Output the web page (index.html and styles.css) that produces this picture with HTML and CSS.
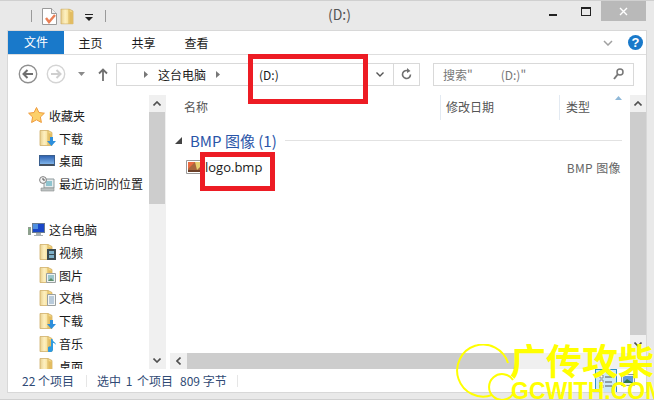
FILE: index.html
```html
<!DOCTYPE html>
<html lang="zh-CN">
<head>
    <meta charset="UTF-8">
    <title>(D:)</title>
    <link rel="stylesheet" href="styles.css">
</head>
<body>
    <svg class="defs" width="0" height="0">
        <defs>
            <linearGradient id="folder-fill" x1="0" y1="0" x2="1" y2="0">
                <stop offset="0" stop-color="#e8cf8e"/>
                <stop offset=".35" stop-color="#fdf0c0"/>
                <stop offset="1" stop-color="#f3cf6e"/>
            </linearGradient>
            <linearGradient id="screen-fill" x1="0" y1="0" x2="0" y2="1">
                <stop offset="0" stop-color="#2f62b0"/>
                <stop offset="1" stop-color="#7fb4ea"/>
            </linearGradient>
        </defs>
        <symbol id="folder" viewBox="0 0 16 16">
            <path d="M1 .5h8l4 2v13H1z" fill="url(#folder-fill)" stroke="#cfae68" stroke-width=".8"/>
            <path d="M9 .5v15" stroke="#d9b75f" stroke-width="1"/>
            <path d="M9.500 3l3.500 1v11.500H9.500z" fill="#e2bc62"/>
        </symbol>
    </svg>

    <div class="window">
        <!-- title bar -->
        <div class="titlebar">
            <span class="qa-sep"></span>
            <svg class="qa-icon" width="15" height="17" viewBox="0 0 15 17">
                <path d="M.5.500h9l5 5v11H.5z" fill="#fff" stroke="#9a9a9a"/>
                <path d="M9.500.500v5h5" fill="#eee" stroke="#9a9a9a"/>
                <path d="M4 10l3 4 6-7" fill="none" stroke="#ea7f55" stroke-width="2.400"/>
            </svg>
            <svg class="qa-icon folder-qa" width="16" height="17" viewBox="0 0 16 16"><use href="#folder"/></svg>
            <svg class="qa-drop" width="8" height="7" viewBox="0 0 8 7">
                <path d="M0 0h8v1H0z M0 3h8L4 7z" fill="#222"/>
            </svg>
            <span class="qa-sep last"></span>
            <span class="title">(D:)</span>
            <div class="controls">
                <span class="ctl-min"></span>
                <span class="ctl-max"></span>
                <span class="ctl-close">
                    <svg width="9" height="9" viewBox="0 0 9 9"><path d="M1 1l7 7M8 1l-7 7" stroke="#fff" stroke-width="1.400"/></svg>
                </span>
            </div>
        </div>

        <div class="inner">
            <!-- ribbon tabs -->
            <div class="ribbon">
                <span class="tab-file">文件</span>
                <span class="tab">主页</span>
                <span class="tab tab-share">共享</span>
                <span class="tab">查看</span>
                <svg class="ribbon-chev" width="10" height="6" viewBox="0 0 10 6"><path d="M1 1l4 4 4-4" fill="none" stroke="#a0a0a0" stroke-width="1.500"/></svg>
                <span class="help">?</span>
            </div>

            <!-- address row -->
            <div class="nav">
                <svg class="nav-back" width="20" height="20" viewBox="0 0 20 20">
                    <circle cx="10" cy="10" r="8.700" fill="#fff" stroke="#8f8f8f" stroke-width="1.400"/>
                    <path d="M15 10H6M9.500 6l-4 4 4 4" fill="none" stroke="#6f6f6f" stroke-width="2"/>
                </svg>
                <svg class="nav-fwd" width="20" height="20" viewBox="0 0 20 20">
                    <circle cx="10" cy="10" r="8.700" fill="#fff" stroke="#d4d4d4" stroke-width="1.400"/>
                    <path d="M5 10h9M10.500 6l4 4-4 4" fill="none" stroke="#cfcfcf" stroke-width="2"/>
                </svg>
                <svg class="nav-down" width="7" height="4" viewBox="0 0 7 4"><path d="M0 0h7L3.500 4z" fill="#8a8a8a"/></svg>
                <svg class="nav-up" width="10" height="13" viewBox="0 0 10 13"><path d="M5 13V2M1 5.500L5 1.500l4 4" fill="none" stroke="#707070" stroke-width="1.800"/></svg>
                <div class="address">
                    <svg class="crumb-arrow first" width="4" height="7" viewBox="0 0 4 7"><path d="M0 0l4 3.500L0 7z" fill="#777"/></svg>
                    <span class="crumb">这台电脑</span>
                    <svg class="crumb-arrow" width="4" height="7" viewBox="0 0 4 7"><path d="M0 0l4 3.500L0 7z" fill="#777"/></svg>
                    <span class="crumb-d">(D:)</span>
                    <svg class="addr-chev" width="8" height="5" viewBox="0 0 8 5"><path d="M.5.500L4 4 7.500.500" fill="none" stroke="#555" stroke-width="1.400"/></svg>
                    <span class="addr-refresh">
                        <svg width="11" height="12" viewBox="0 0 11 12"><path d="M9.500 6.500a4 4 0 1 1-2-3.500" fill="none" stroke="#6f6f6f" stroke-width="1.600"/><path d="M6 0l3.500 3L6 5z" fill="#6f6f6f"/></svg>
                    </span>
                </div>
                <div class="search">
                    <span class="search-text">搜索"<span class="search-gap"></span>(D:)"</span>
                    <svg width="11" height="12" viewBox="0 0 11 12"><circle cx="7" cy="4" r="3" fill="none" stroke="#777" stroke-width="1.500"/><path d="M5 6l-4 5" stroke="#777" stroke-width="2"/></svg>
                </div>
            </div>

            <!-- sidebar and files -->
            <div class="panes">
                <div class="sidebar">
                    <div class="tree">
                        <div class="tree-row top">
                            <svg width="17" height="16" viewBox="0 0 17 16"><path d="M8.500 .5l2.400 5 5.500.7-4 3.800 1 5.500-4.900-2.700-4.900 2.700 1-5.500-4-3.800 5.500-.7z" fill="#fcd06a" stroke="#ee9a3c"/></svg>
                            收藏夹
                        </div>
                        <div class="tree-row sub">
                            <span class="tree-icon">
                                <svg width="16" height="16"><use href="#folder"/></svg>
                                <svg class="badge" width="9" height="9" viewBox="0 0 9 9"><path d="M3 0h3v4h3L4.500 9 0 4h3z" fill="#2d8fdc"/></svg>
                            </span>
                            下载
                        </div>
                        <div class="tree-row sub">
                            <svg width="16" height="16" viewBox="0 0 16 16"><path d="M0 2h16v11H0z" fill="#3a5f8e"/><path d="M1 3h14v8H1z" fill="url(#screen-fill)"/><path d="M1 11h14v2H1z" fill="#44505e"/></svg>
                            桌面
                        </div>
                        <div class="tree-row sub">
                            <svg width="16" height="16" viewBox="0 0 16 16"><path d="M5 3h10v9H5z" fill="#e4eaec" stroke="#8f9a9c"/><path d="M7 5h6v5H7z" fill="#8fc4cf"/><circle cx="4" cy="4" r="3.400" fill="#f4f4f4" stroke="#808080"/><path d="M4 2v2h2" fill="none" stroke="#555"/><path d="M2 12h13v3H2z" fill="#bcc2c2" stroke="#8a8f8f" stroke-width=".6"/></svg>
                            最近访问的位置
                        </div>
                        <div class="tree-row top pc">
                            <svg width="17" height="16" viewBox="0 0 17 16"><path d="M0 5h3v8H0z" fill="#8fa08f"/><path d="M1 7h1v1H1z" fill="#5fd06a"/><path d="M4 1h13v10H4z" fill="#6a7c90"/><path d="M5 2h11v8H5z" fill="#1a47c8"/><path d="M5 2h5v5H5z" fill="#4f8fe0"/><path d="M8 11h5v2h2v1H6v-1h2z" fill="#a8b0b4"/></svg>
                            这台电脑
                        </div>
                        <div class="tree-row sub">
                            <span class="tree-icon">
                                <svg width="16" height="16"><use href="#folder"/></svg>
                                <svg class="badge" width="9" height="11" viewBox="0 0 9 11"><path d="M0 0h9v11H0z" fill="#3b4a50"/><path d="M2 2h5v3H2zM2 6h5v3H2z" fill="#7db0c8"/></svg>
                            </span>
                            视频
                        </div>
                        <div class="tree-row sub">
                            <span class="tree-icon">
                                <svg width="16" height="16"><use href="#folder"/></svg>
                                <svg class="badge" width="10" height="10" viewBox="0 0 10 10"><path d="M.5.500h9v9h-9z" fill="#eef2f2" stroke="#9aa0a0"/><path d="M2 2h6v6H2z" fill="#9cc6cc"/><path d="M2 8l3-3 3 3z" fill="#5f8f6a"/></svg>
                            </span>
                            图片
                        </div>
                        <div class="tree-row sub">
                            <span class="tree-icon">
                                <svg width="16" height="16"><use href="#folder"/></svg>
                                <svg class="badge" width="9" height="12" viewBox="0 0 9 12"><path d="M.5.500h8v11h-8z" fill="#f4f6f6" stroke="#9aa0a0"/><path d="M2 3h5M2 5h5M2 7h5M2 9h5" stroke="#7fa0c0"/></svg>
                            </span>
                            文档
                        </div>
                        <div class="tree-row sub">
                            <span class="tree-icon">
                                <svg width="16" height="16"><use href="#folder"/></svg>
                                <svg class="badge" width="9" height="9" viewBox="0 0 9 9"><path d="M3 0h3v4h3L4.500 9 0 4h3z" fill="#2d8fdc"/></svg>
                            </span>
                            下载
                        </div>
                        <div class="tree-row sub">
                            <span class="tree-icon">
                                <svg width="16" height="16"><use href="#folder"/></svg>
                                <svg class="badge" width="8" height="13" viewBox="0 0 8 13"><path d="M3 0l1.500 0c0 3 3.500 3 3.500 6-1-1.500-2-2-3-2v6a3 3 0 1 1-2-2.500z" fill="#2d9ae0"/></svg>
                            </span>
                            音乐
                        </div>
                        <div class="tree-row sub">
                            <span class="tree-icon">
                                <svg width="16" height="16"><use href="#folder"/></svg>
                            </span>
                            桌面
                        </div>
                    </div>
                    <div class="vscroll">
                        <span class="sb-btn">
                            <svg width="8" height="5" viewBox="0 0 8 5"><path d="M.5 4.500L4 1l3.500 3.500" fill="none" stroke="#505050" stroke-width="1.600"/></svg>
                        </span>
                        <div class="sb-track"><div class="sb-thumb side"></div></div>
                        <span class="sb-btn">
                            <svg width="8" height="5" viewBox="0 0 8 5"><path d="M.5.500L4 4 7.500.500" fill="none" stroke="#505050" stroke-width="1.600"/></svg>
                        </span>
                    </div>
                </div>

                <div class="main">
                    <div class="main-top">
                        <div class="files">
                            <div class="columns">
                                <span class="col col-name">名称</span>
                                <span class="col col-date">修改日期</span>
                                <span class="col col-type">类型</span>
                                <svg class="sort" width="7" height="4" viewBox="0 0 7 4"><path d="M0 4l3.500-4L7 4z" fill="#8fb8d8"/></svg>
                            </div>
                            <div class="group">
                                <svg width="7" height="7" viewBox="0 0 7 7"><path d="M7 0v7H0z" fill="#444"/></svg>
                                <span class="group-name">BMP 图像 (1)</span>
                                <span class="group-line"></span>
                            </div>
                            <div class="file">
                                <svg width="16" height="16" viewBox="0 0 16 16"><path d="M.5 1.500h15v13H.5z" fill="#fff" stroke="#9a9a9a"/><path d="M2 3h12v10H2z" fill="#a8663c"/><path d="M2 3h7L2 10z" fill="#ea6a40"/><path d="M9 3h5v5l-3 3z" fill="#e8d070"/><path d="M2 11h12v2H2z" fill="#6c4028"/></svg>
                                <span class="file-name">logo.bmp</span>
                                <span class="file-type">BMP 图像</span>
                            </div>
                        </div>
                        <div class="vscroll">
                            <span class="sb-btn">
                                <svg width="8" height="5" viewBox="0 0 8 5"><path d="M.5 4.500L4 1l3.500 3.500" fill="none" stroke="#505050" stroke-width="1.600"/></svg>
                            </span>
                            <div class="sb-track"><div class="sb-thumb main-thumb"></div></div>
                            <span class="sb-btn">
                                <svg width="8" height="5" viewBox="0 0 8 5"><path d="M.5.500L4 4 7.500.500" fill="none" stroke="#505050" stroke-width="1.600"/></svg>
                            </span>
                        </div>
                    </div>
                    <div class="hscroll">
                        <span class="sb-btn">
                            <svg width="5" height="8" viewBox="0 0 5 8"><path d="M4.500.500L1 4l3.500 3.500" fill="none" stroke="#505050" stroke-width="1.600"/></svg>
                        </span>
                        <div class="h-thumb"></div>
                    </div>
                </div>
            </div>

            <!-- status bar -->
            <div class="status">
                <span class="st-count">22 个项目</span>
                <span class="st-sep"></span>
                <span class="st-sel">选中 1 个项目</span>
                <span class="st-size">809 字节</span>
                <span class="st-sep"></span>
                <div class="views">
                    <span class="view on">
                        <svg width="14" height="14" viewBox="0 0 14 14"><path d="M1 1h3v3H1zM1 6h3v3H1zM1 11h3v3H1z" fill="#fff" stroke="#777" stroke-width=".8"/><path d="M6 3h7M6 8h7M6 12h7" stroke="#555"/></svg>
                    </span>
                    <span class="view">
                        <svg width="14" height="14" viewBox="0 0 14 14"><path d="M.5 1.500h13v11H.5z" fill="#eef2f2" stroke="#8f9a9c"/><path d="M2 3h10v7H2z" fill="#5f9ade"/><path d="M2 10l4-4 6 4z" fill="#2f7a4a"/></svg>
                    </span>
                </div>
            </div>
        </div>
    </div>

    <!-- annotations and watermark sit over the window -->
    <div class="mark mark-addr"></div>
    <div class="mark mark-file"></div>
    <div class="watermark">
        <svg class="wm-ring" width="62" height="56" viewBox="0 0 62 56">
            <path d="M52 19A26 26 0 1 0 36 51" fill="none" stroke="#ffff00" stroke-width="2"/>
            <path d="M57 36A13 13 0 1 0 57 50" fill="none" stroke="#ffff00" stroke-width="2"/>
        </svg>
        <div class="wm-cn">广传攻柴</div>
        <div class="wm-en">GCWITH.COM</div>
    </div>
</body>
</html>
```

FILE: styles.css
```css
/* window frame */
html, body {
    margin: 0;
    height: 400px;
    overflow: hidden;
}
body {
    position: relative;
    font-family: "Noto Sans CJK SC", "Liberation Sans", sans-serif;
    font-size: 12px;
    color: #1a1a1a;
    background-color: #e9e9e9;
}
.defs {
    position: absolute;
}
.window {
    height: 400px;
    box-sizing: border-box;
    display: flex;
    flex-direction: column;
    border-top: 1px solid #d0d0d0;
    border-bottom: 1px solid #d0d0d0;
    padding: 0 8px 7px;
}

/* title bar */
.titlebar {
    position: relative;
    flex: none;
    height: 30px;
    display: flex;
    align-items: center;
    padding-left: 23px;
}
.qa-sep {
    width: 1px;
    height: 12px;
    background-color: #9a9a9a;
    margin-right: 10px;
}
.qa-sep.last {
    margin-left: 12px;
}
.qa-icon {
    margin-right: 3px;
}
.qa-drop {
    margin-left: 6px;
    margin-top: 3px;
}
.title {
    position: absolute;
    left: 320px;
    top: 3px;
    font-size: 14px;
    color: #555;
}
.controls {
    margin-left: auto;
    display: flex;
    align-items: flex-start;
    align-self: flex-start;
}
.ctl-min {
    width: 8px;
    height: 2px;
    background-color: #222;
    margin: 13px 24px 0 0;
}
.ctl-max {
    width: 8px;
    height: 6px;
    border: 1px solid #222;
    border-top-width: 2px;
    margin: 6px 10px 0 0;
}
.ctl-close {
    width: 45px;
    height: 20px;
    background-color: #b9b9b9;
    display: flex;
    align-items: center;
    justify-content: center;
}

/* white area */
.inner {
    flex: 1;
    min-height: 0;
    background-color: #fff;
    display: flex;
    flex-direction: column;
    outline: 1px solid #d8d8d8;
}
.ribbon {
    flex: none;
    height: 23px;
    display: flex;
    align-items: center;
    border-bottom: 1px solid #dedede;
}
.tab-file {
    width: 56px;
    height: 23px;
    line-height: 21px;
    text-align: center;
    color: #fff;
    background-color: #1979ca;
}
.tab {
    width: 53px;
    text-align: center;
}
.ribbon-chev {
    margin-left: auto;
    margin-right: 15px;
}
.help {
    width: 15px;
    height: 15px;
    margin-right: 3px;
    border-radius: 50%;
    background-color: #1979ca;
    color: #fff;
    font: bold 13px/15px "Liberation Sans", sans-serif;
    text-align: center;
}

/* address row */
.nav {
    flex: none;
    height: 40px;
    display: flex;
    align-items: center;
    padding-bottom: 2px;
    box-sizing: border-box;
}
.nav-back {
    margin-left: 10px;
}
.nav-fwd {
    margin-left: 8px;
}
.nav-down {
    margin-left: 12px;
}
.nav-up {
    margin-left: 13px;
}
.address {
    width: 304px;
    height: 23px;
    box-sizing: border-box;
    margin-left: 8px;
    display: flex;
    align-items: center;
    border: 1px solid #d9d9d9;
}
.crumb-arrow.first {
    margin-left: 27px;
}
.crumb {
    margin: 0 10px 0 10px;
}
.crumb-d {
    margin-left: 39px;
}
.addr-chev {
    margin-left: auto;
    margin-right: 9px;
}
.addr-refresh {
    width: 25px;
    height: 21px;
    display: flex;
    align-items: center;
    justify-content: center;
    border-left: 1px solid #d9d9d9;
}
.search {
    width: 201px;
    height: 23px;
    box-sizing: border-box;
    margin-left: 13px;
    padding: 0 9px;
    display: flex;
    align-items: center;
    justify-content: space-between;
    border: 1px solid #d9d9d9;
    color: #777;
}
.search-gap {
    display: inline-block;
    width: 28px;
}

/* panes */
.panes {
    flex: 1;
    min-height: 0;
    display: flex;
}
.sidebar {
    flex: none;
    width: 157px;
    display: flex;
    overflow: hidden;
    border-right: 1px solid #f0f0f0;
    margin-right: 2px;
}
.tree {
    width: 141px;
    padding-top: 9px;
    overflow: hidden;
}
.tree-row {
    height: 22.8px;
    display: flex;
    align-items: center;
    gap: 4px;
    white-space: nowrap;
}
.tree-row.top {
    padding-left: 20px;
}
.tree-row.sub {
    padding-left: 31px;
}
.tree-row.pc {
    margin-top: 23px;
}
.tree-icon {
    position: relative;
    width: 16px;
    height: 16px;
    flex: none;
}
.badge {
    position: absolute;
    right: -1px;
    bottom: 0;
}
.vscroll {
    flex: none;
    width: 16px;
    display: flex;
    flex-direction: column;
    background-color: #f0f0f0;
}
.sb-btn {
    flex: none;
    height: 17px;
    display: flex;
    align-items: center;
    justify-content: center;
}
.sb-track {
    flex: 1;
    min-height: 0;
}
.sb-thumb {
    background-color: #cdcdcd;
}
.sb-thumb.side {
    height: 92px;
}
.sb-thumb.main-thumb {
    height: 223px;
}
.main {
    flex: 1;
    min-width: 0;
    display: flex;
    flex-direction: column;
}
.main-top {
    flex: 1;
    min-height: 0;
    display: flex;
}
.files {
    flex: 1;
    min-width: 0;
}
.columns {
    position: relative;
    height: 25px;
    display: grid;
    grid-template-columns: 272px 119px 1fr;
    align-items: center;
    color: #555;
}
.col {
    height: 25px;
    line-height: 24px;
    box-sizing: border-box;
}
.col-name {
    padding-left: 16px;
}
.col-date,
.col-type {
    padding-left: 5px;
    border-left: 1px solid #e3eaf2;
}
.col-type {
    padding-left: 6px;
}
.sort {
    position: absolute;
    right: 8px;
    top: 1px;
}
.group {
    height: 22px;
    margin-top: 9px;
    padding-left: 7px;
    display: flex;
    align-items: center;
    gap: 8px;
}
.group-name {
    font-size: 15px;
    color: #2a55a8;
}
.group-line {
    flex: 1;
    height: 1px;
    background-color: #e2e2e2;
    margin: 0 8px 0 0;
}
.file {
    height: 22px;
    margin-top: 5px;
    padding-left: 18px;
    display: flex;
    align-items: center;
}
.file-name {
    margin-left: 3px;
    font-family: "Open Sans", "Noto Sans CJK SC", sans-serif;
    font-size: 13px;
}
.file-type {
    margin-left: auto;
    margin-right: 9px;
    letter-spacing: .4px;
    color: #666;
}
.hscroll {
    flex: none;
    height: 16px;
    margin-left: 2px;
    display: flex;
    background-color: #f0f0f0;
}
.hscroll .sb-btn {
    width: 17px;
    height: 16px;
}
.h-thumb {
    width: 327px;
    background-color: #cdcdcd;
}

/* status bar */
.status {
    flex: none;
    height: 23px;
    display: flex;
    align-items: center;
    color: #2f4a75;
    padding-left: 14px;
}
.st-sep {
    width: 1px;
    height: 12px;
    background-color: #e6e6e6;
}
.st-count {
    width: 64px;
}
.st-sel {
    margin-left: 10px;
    width: 83px;
    word-spacing: 2px;
}
.st-size {
    width: 57px;
}
.views {
    margin-left: auto;
    margin-right: 8px;
    display: flex;
    gap: 1px;
    height: 23px;
    overflow: hidden;
}
.view {
    width: 20px;
    height: 22px;
    display: flex;
    align-items: center;
    justify-content: center;
}
.view.on {
    background-color: #cce8f7;
    border: 1px solid #2b90c8;
}

/* red boxes drawn on the screenshot */
.mark {
    position: absolute;
    box-sizing: border-box;
    border: 5px solid #ed1c24;
}
.mark-addr {
    left: 248px;
    top: 54px;
    width: 120px;
    height: 50px;
}
.mark-file {
    left: 200px;
    top: 152px;
    width: 75px;
    height: 39px;
}

/* site watermark, bottom right */
.watermark {
    position: absolute;
    left: 456px;
    top: 344px;
    width: 198px;
    height: 56px;
    color: #ffff00;
    font-weight: 700;
    overflow: hidden;
}
.wm-ring {
    position: absolute;
    left: 0;
    top: 0;
}
.wm-cn {
    position: absolute;
    left: 54px;
    top: -11px;
    font-size: 36px;
    line-height: 52px;
    white-space: nowrap;
}
.wm-en {
    position: absolute;
    left: 55px;
    top: 35px;
    font: bold 23px/24px "Liberation Sans", sans-serif;
    white-space: nowrap;
}
```
